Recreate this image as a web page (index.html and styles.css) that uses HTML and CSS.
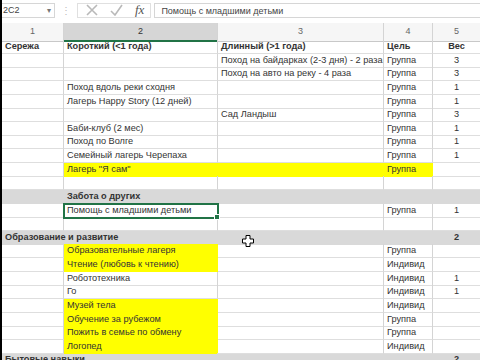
FILE: index.html
```html
<!DOCTYPE html>
<html>
<head>
	<title>Лист</title>
	<meta http-equiv="content-type" content="text/html; charset=utf-8" />
	<link rel="stylesheet" href="styles.css">
</head>
<body>
	<div class="fbar">
		<div class="namebox"><span>2C2</span><span class="arrow">&#9662;</span></div>
		<div class="grip">&#8942;</div>
		<div class="btns">
			<svg width="12" height="12" viewBox="0 0 12 12"><path d="M1 1L11 11M11 1L1 11" stroke="#b9b9b9" stroke-width="1.6" fill="none"/></svg>
			<svg width="13" height="12" viewBox="0 0 13 12"><path d="M1 7L5 11L12 1" stroke="#b9b9b9" stroke-width="1.6" fill="none"/></svg>
			<span class="fx">fx</span>
		</div>
		<div class="formula">Помощь с младшими детьми</div>
	</div>

	<div class="sheet">
		<div class="row hdr">
			<div>1</div><div class="sel">2</div><div>3</div><div>4</div><div>5</div>
		</div>
		<div class="row bold">
			<div>Сережа</div><div>Короткий (&lt;1 года)</div><div>Длинный (&gt;1 года)</div><div>Цель</div><div class="num">Вес</div>
		</div>
		<div class="row">
			<div></div><div></div><div>Поход на байдарках (2-3 дня) - 2 раза</div><div>Группа</div><div class="num">3</div>
		</div>
		<div class="row">
			<div></div><div></div><div>Поход на авто на реку - 4 раза</div><div>Группа</div><div class="num">3</div>
		</div>
		<div class="row">
			<div></div><div>Поход вдоль реки сходня</div><div></div><div>Группа</div><div class="num">1</div>
		</div>
		<div class="row">
			<div></div><div>Лагерь Happy Story (12 дней)</div><div></div><div>Группа</div><div class="num">1</div>
		</div>
		<div class="row">
			<div></div><div></div><div>Сад Ландыш</div><div>Группа</div><div class="num">3</div>
		</div>
		<div class="row">
			<div></div><div>Баби-клуб (2 мес)</div><div></div><div>Группа</div><div class="num">1</div>
		</div>
		<div class="row">
			<div></div><div>Поход по Волге</div><div></div><div>Группа</div><div class="num">1</div>
		</div>
		<div class="row">
			<div></div><div>Семейный лагерь Черепаха</div><div></div><div>Группа</div><div class="num">1</div>
		</div>
		<div class="row">
			<div></div><div class="yel">Лагерь "Я сам"</div><div class="yel"></div><div class="yel">Группа</div><div class="num"></div>
		</div>
		<div class="row">
			<div></div><div></div><div></div><div></div><div></div>
		</div>
		<div class="row grey bold">
			<div></div><div>Забота о других</div><div></div><div></div><div></div>
		</div>
		<div class="row">
			<div></div><div class="cur">Помощь с младшими детьми</div><div></div><div>Группа</div><div class="num">1</div>
		</div>
		<div class="row">
			<div></div><div></div><div></div><div></div><div></div>
		</div>
		<div class="row grey bold">
			<div>Образование и развитие</div><div></div><div></div><div></div><div class="num">2</div>
		</div>
		<div class="row">
			<div></div><div class="yel">Образовательные лагеря</div><div></div><div>Группа</div><div class="num"></div>
		</div>
		<div class="row">
			<div></div><div class="yel">Чтение (любовь к чтению)</div><div></div><div>Индивид</div><div class="num"></div>
		</div>
		<div class="row">
			<div></div><div>Робототехника</div><div></div><div>Индивид</div><div class="num">1</div>
		</div>
		<div class="row">
			<div></div><div>Го</div><div></div><div>Индивид</div><div class="num">1</div>
		</div>
		<div class="row">
			<div></div><div class="yel">Музей тела</div><div></div><div>Индивид</div><div class="num"></div>
		</div>
		<div class="row">
			<div></div><div class="yel">Обучение за рубежом</div><div></div><div>Группа</div><div class="num"></div>
		</div>
		<div class="row">
			<div></div><div class="yel">Пожить в семье по обмену</div><div></div><div>Группа</div><div class="num"></div>
		</div>
		<div class="row">
			<div></div><div class="yel">Логопед</div><div></div><div>Индивид</div><div class="num"></div>
		</div>
		<div class="row grey bold">
			<div>Бытовые навыки</div><div></div><div></div><div></div><div class="num">2</div>
		</div>
	</div>

	<svg class="pointer" width="12" height="12" viewBox="0 0 12 12"><path d="M4 0.5h4v3.5h3.5v4h-3.5v3.5h-4v-3.5h-3.5v-4h3.5z" fill="#fff" stroke="#000" stroke-width="1"/></svg>
</body>
</html>
```

FILE: styles.css
```css
body {
	margin:0;
	width:480px;
	height:360px;
	overflow:hidden;
	background:#fff;
	border-left:2px solid #000;
	box-sizing:border-box;
	font-family:"Liberation Sans", Arial, sans-serif;
	font-size:9.2px;
	color:#333;
	position:relative;
}

.fbar {
	display:flex;
	align-items:center;
	height:20px;
	margin-bottom:3px;
	color:#444;
}

.namebox {
	display:flex;
	justify-content:space-between;
	align-items:center;
	width:53px;
	height:15px;
	border:1px solid #d6d6d6;
	border-left:none;
	padding:0 3px 0 1px;
	box-sizing:border-box;
	font-size:9px;
}

.arrow {
	font-size:8px;
	color:#777;
}

.grip {
	width:22px;
	text-align:center;
	color:#bbb;
	font-size:10px;
}

.btns {
	display:flex;
	align-items:center;
	gap:12px;
	height:15px;
	padding:0 6px 0 8px;
	border:1px solid #e0e0e0;
	box-sizing:border-box;
}

.fx {
	font-family:"Liberation Serif", serif;
	font-style:italic;
	font-size:13px;
	color:#555;
}

.formula {
	flex:1;
	height:15px;
	line-height:14px;
	margin-left:3px;
	padding-left:6px;
	border:1px solid #d6d6d6;
	border-right:none;
	box-sizing:border-box;
	font-size:9px;
	color:#444;
}

.row {
	display:grid;
	grid-template-columns:62px 154px 166px 49px 47px;
	height:13.64px;
}

.row > div {
	border-right:1px solid #d4d4d4;
	border-bottom:1px solid #dedede;
	padding:0 3px;
	line-height:13px;
	white-space:nowrap;
	box-sizing:border-box;
}

.row > div:last-child {
	border-right:none;
}

.row .num {
	text-align:center;
}

.hdr {
	height:17px;
}

.hdr > div {
	background:#f6f6f6;
	text-align:center;
	color:#666;
	font-size:9px;
	line-height:17px;
	border-bottom:1px solid #c8c8c8;
}

.hdr .sel {
	background:#d6d6d6;
	border-bottom:2px solid #217346;
	color:#333;
}

.bold {
	font-weight:bold;
}

.grey {
	background:#d9d9d9;
}

.grey > div {
	border-color:#d9d9d9;
}

.yel {
	background:#ffff00;
}

.row > .yel {
	border-color:#ffff00;
}

.row > .cur {
	position:relative;
	outline:2px solid #217346;
	outline-offset:-1px;
}

.cur::after {
	content:"";
	position:absolute;
	right:-3px;
	bottom:-3px;
	width:4px;
	height:4px;
	background:#217346;
	border:1px solid #fff;
}

.pointer {
	position:absolute;
	left:240px;
	top:235px;
}
```
